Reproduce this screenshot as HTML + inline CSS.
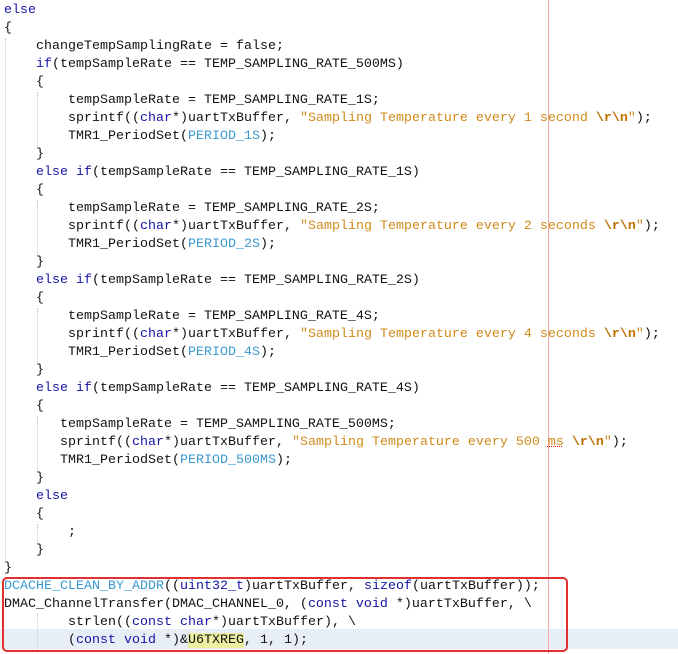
<!DOCTYPE html>
<html><head><meta charset="utf-8"><style>
html,body{margin:0;padding:0;background:#fff;width:678px;height:654px;overflow:hidden}
#c{position:absolute;left:4px;top:2px;margin:0;font-family:"Liberation Mono",monospace;font-size:13.33px;line-height:18px;color:#111;white-space:pre}
.k{color:#1515a3}
.s{color:#d08a1a}
.e{color:#c07000;font-weight:bold}
.m{color:#3a9ad0}
.hl{background:#eeeea0}
.u{text-decoration:underline dotted #d00;text-decoration-thickness:1px}
#cur{position:absolute;left:0;top:629px;width:678px;height:20px;background:#e8eef6}
#red{position:absolute;left:548px;top:0;width:1px;height:654px;background:#f4a8a8}
#box{position:absolute;left:2px;top:577px;width:562px;height:71px;border:2px solid #e03030;border-radius:5px}
.g{position:absolute;width:0;border-left:1px dotted #c8c8c8}
</style></head><body>
<div id="cur"></div>
<div id="red"></div>
<div class="g" style="left:5px;top:38px;height:522px"></div>
<div class="g" style="left:37px;top:92px;height:54px"></div>
<div class="g" style="left:37px;top:200px;height:54px"></div>
<div class="g" style="left:37px;top:308px;height:54px"></div>
<div class="g" style="left:37px;top:416px;height:54px"></div>
<div class="g" style="left:37px;top:524px;height:18px"></div>
<div class="g" style="left:37px;top:614px;height:36px"></div>
<pre id="c"><span class="k">else</span>
{
    changeTempSamplingRate = false;
    <span class="k">if</span>(tempSampleRate == TEMP_SAMPLING_RATE_500MS)
    {
        tempSampleRate = TEMP_SAMPLING_RATE_1S;
        sprintf((<span class="k">char</span>*)uartTxBuffer, <span class="s">"Sampling Temperature every 1 second </span><span class="e">\r\n</span><span class="s">"</span>);
        TMR1_PeriodSet(<span class="m">PERIOD_1S</span>);
    }
    <span class="k">else if</span>(tempSampleRate == TEMP_SAMPLING_RATE_1S)
    {
        tempSampleRate = TEMP_SAMPLING_RATE_2S;
        sprintf((<span class="k">char</span>*)uartTxBuffer, <span class="s">"Sampling Temperature every 2 seconds </span><span class="e">\r\n</span><span class="s">"</span>);
        TMR1_PeriodSet(<span class="m">PERIOD_2S</span>);
    }
    <span class="k">else if</span>(tempSampleRate == TEMP_SAMPLING_RATE_2S)
    {
        tempSampleRate = TEMP_SAMPLING_RATE_4S;
        sprintf((<span class="k">char</span>*)uartTxBuffer, <span class="s">"Sampling Temperature every 4 seconds </span><span class="e">\r\n</span><span class="s">"</span>);
        TMR1_PeriodSet(<span class="m">PERIOD_4S</span>);
    }
    <span class="k">else if</span>(tempSampleRate == TEMP_SAMPLING_RATE_4S)
    {
       tempSampleRate = TEMP_SAMPLING_RATE_500MS;
       sprintf((<span class="k">char</span>*)uartTxBuffer, <span class="s">"Sampling Temperature every 500 <span class="u">ms</span> </span><span class="e">\r\n</span><span class="s">"</span>);
       TMR1_PeriodSet(<span class="m">PERIOD_500MS</span>);
    }
    <span class="k">else</span>
    {
        ;
    }
}
<span class="m">DCACHE_CLEAN_BY_ADDR</span>((<span class="k">uint32_t</span>)uartTxBuffer, <span class="k">sizeof</span>(uartTxBuffer));
DMAC_ChannelTransfer(DMAC_CHANNEL_0, (<span class="k">const void</span> *)uartTxBuffer, \
        strlen((<span class="k">const char</span>*)uartTxBuffer), \
        (<span class="k">const void</span> *)&amp;<span class="hl">U6TXREG</span>, 1, 1);</pre>
<div id="box"></div>
</body></html>
